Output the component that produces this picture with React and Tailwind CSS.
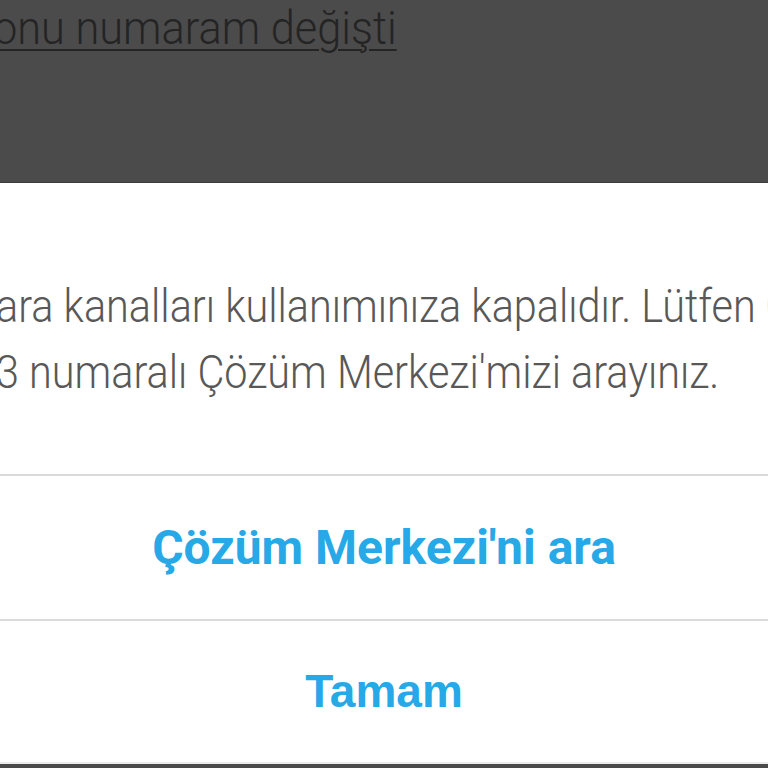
import React from "react";

const App = () => {
	return (
		<div className="w-[768px] h-[768px] overflow-hidden flex flex-col bg-[#4a4a4a] font-['Roboto',sans-serif]">
			{/* dimmed page behind the dialog */}
			<div className="h-[183px] shrink-0 bg-[#4b4b4b] border-b border-[#3c3c3c] overflow-hidden">
				<div className="-ml-[7px] pt-[6px] origin-left scale-x-[0.942] text-[46px] leading-[44px] font-light text-[#242424] underline decoration-2 underline-offset-[5px] whitespace-nowrap">
					onu numaram değişti
				</div>
			</div>

			{/* dialog */}
			<div className="flex-1 flex flex-col bg-white">
				<div className="h-[291px] shrink-0 overflow-hidden pt-[90px]">
					<p className="-ml-[4px] origin-left scale-x-[0.9] text-[46px] leading-[66px] text-[#585858] font-light whitespace-nowrap">
						ara kanalları kullanımınıza kapalıdır. Lütfen 0
						<br />
						3 numaralı Çözüm Merkezi'mizi arayınız.
					</p>
				</div>
				<div className="h-[2px] bg-[#dadada]" />
				<button className="h-[143px] flex items-center justify-center text-[48px] font-bold text-[#27a8e7]">
					Çözüm Merkezi'ni ara
				</button>
				<div className="h-[2px] bg-[#dadada]" />
				<button className="flex-1 flex items-center justify-center text-[46px] font-bold text-[#27a8e7] font-['Liberation_Sans',Arial,sans-serif]">
					Tamam
				</button>
				<div className="h-[2px] bg-[#ececec]" />
			</div>
			<div className="h-[4px] shrink-0 bg-[#4a4a4a]" />
		</div>
	);
};

export default App;
